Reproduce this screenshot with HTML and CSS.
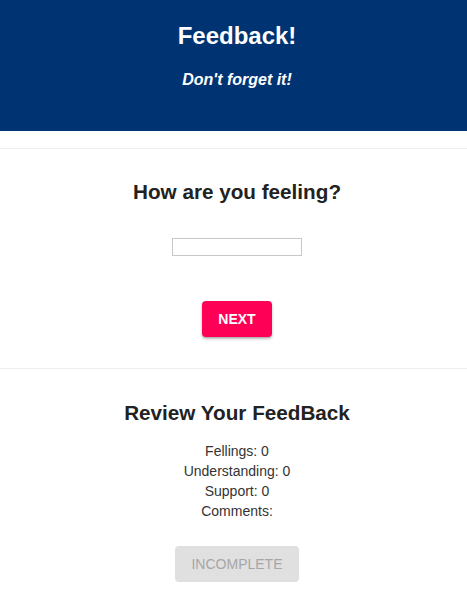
FILE: index.html
```html
<!DOCTYPE html>
<html>
<head>
<meta charset="utf-8">
<link rel="stylesheet" href="styles.css">
</head>
<body>
<header class="hero">
  <h1 class="hero-title">Feedback!</h1>
  <p class="hero-sub">Don't forget it!</p>
</header>
<section class="card step">
  <h2 class="card-title">How are you feeling?</h2>
  <input class="field" type="text">
  <button class="btn btn-primary">NEXT</button>
</section>
<section class="card review">
  <h2 class="card-title">Review Your FeedBack</h2>
  <div class="summary">
    <p>Fellings: 0</p>
    <p>Understanding: 0</p>
    <p>Support: 0</p>
    <p>Comments:</p>
  </div>
  <button class="btn btn-disabled">INCOMPLETE</button>
</section>
</body>
</html>
```
FILE: styles.css
```css
* { box-sizing: border-box; }
html, body { margin: 0; padding: 0; background: #fff; }
body { font-family: "Liberation Sans", Arial, Helvetica, sans-serif; color: #333; }

.hero {
  background: #003371;
  color: #fff;
  text-align: center;
  padding: 22px 0 41px 7px;
  height: 131px;
  margin-bottom: 17px;
}
.hero-title {
  margin: 0;
  font-size: 24px;
  line-height: 28px;
  font-weight: bold;
}
.hero-sub {
  margin: 20px 0 0;
  font-size: 16px;
  line-height: 20px;
  font-weight: bold;
  font-style: italic;
}

.card {
  border-top: 1px solid #eeeeee;
  display: flex;
  flex-direction: column;
  align-items: center;
  text-align: center;
  padding-left: 7px;
}
.card-title {
  margin: 0;
  font-size: 20.7px;
  line-height: 24px;
  font-weight: bold;
  color: #222;
}
.step { padding-top: 31px; padding-bottom: 31px; }
.field {
  display: block;
  width: 130px;
  height: 18px;
  margin: 34px 0 45px;
  border: 1px solid #c8c8c8;
  padding: 0;
  background: #fff;
}
.btn {
  font-family: "Liberation Sans", Arial, Helvetica, sans-serif;
  font-size: 14px;
  height: 36px;
  border: none;
  border-radius: 4px;
  padding: 0 16px;
  cursor: pointer;
}
.btn-primary {
  background: #ff0057;
  color: #fff;
  font-weight: bold;
  width: 70px;
  box-shadow: 0 2px 3px rgba(0,0,0,0.25), 0 1px 1px rgba(0,0,0,0.12);
}
.review { padding-top: 32px; padding-bottom: 40px; }
.summary {
  margin: 16px 0 25px;
  font-size: 14px;
  line-height: 20px;
  color: #333;
}
.summary p { margin: 0; }
.btn-disabled {
  background: #e0e0e0;
  color: #a6a6a6;
  width: 124px;
  padding: 0;
}
```
